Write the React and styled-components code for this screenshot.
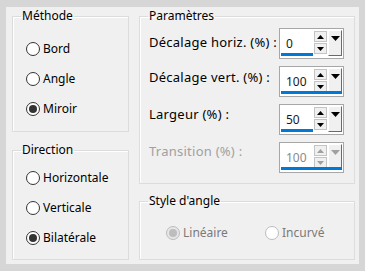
import React from "react";
import styled, { createGlobalStyle } from "styled-components";

const Global = createGlobalStyle`
  html, body { margin: 0; padding: 0; }
  body { font-family: "Noto Sans", "Open Sans", sans-serif; }
`;

const Frame = styled.div`
  width: 365px;
  height: 271px;
  box-sizing: border-box;
  padding: 7px 6px;
  background: #d6d6d6;
`;

const Panel = styled.div`
  height: 100%;
  box-sizing: border-box;
  background: #f0f0f0;
  padding: 1px 4px 3px 6px;
  display: grid;
  grid-template-columns: 117px 216px;
  column-gap: 10px;
  font-size: 12px;
  line-height: 16px;
  color: #000;
`;

const Column = styled.div`
  display: flex;
  flex-direction: column;
  gap: ${(p) => p.$gap}px;
`;

const Group = styled.fieldset`
  margin: 0;
  padding: 0;
  min-width: 0;
  border: 1px solid #dcdcdc;
  box-shadow: inset 1px 1px 0 #fff;
`;

const Legend = styled.legend`
  padding: 0 1px;
  margin-left: 8px;
  font-size: 12px;
  line-height: 16px;
  color: #000;
`;

const Content = styled.div`
  padding: ${(p) => p.$pad};
  display: flex;
  flex-direction: ${(p) => (p.$row ? "row" : "column")};
  gap: ${(p) => p.$gap}px;
`;

const RadioRow = styled.label`
  display: flex;
  align-items: center;
  gap: 3px;
  height: 16px;
  color: ${(p) => (p.$disabled ? "#7a7a7a" : "#000")};
  width: ${(p) => (p.$w ? p.$w + "px" : "auto")};
`;

const Circle = styled.span`
  width: 14px;
  height: 14px;
  box-sizing: border-box;
  border-radius: 50%;
  border: 1px solid ${(p) => (p.$disabled ? "#bcbcbc" : "#333")};
  background: ${(p) => (p.$disabled && p.$on ? "#e6e6e6" : "#fff")};
  display: flex;
  align-items: center;
  justify-content: center;
  flex: none;
  &::after {
    content: "";
    display: ${(p) => (p.$on ? "block" : "none")};
    width: 8px;
    height: 8px;
    border-radius: 50%;
    background: ${(p) => (p.$disabled ? "#bdbdbd" : "#333")};
  }
`;

const ParamRow = styled.div`
  display: flex;
  justify-content: space-between;
  align-items: flex-start;
  height: 31px;
`;

const ParamLabel = styled.span`
  padding-top: ${(p) => p.$top}px;
  font-size: 13px;
  letter-spacing: 0.25px;
  color: ${(p) => (p.$disabled ? "#a0a0a0" : "#000")};
`;

const Spin = styled.div`
  position: relative;
  width: 65px;
  height: 31px;
  box-sizing: border-box;
  border: 1px solid #a7a7a7;
  background: #fff;
  display: flex;
  padding: 1px;
`;

const Field = styled.div`
  flex: 1;
  padding: 6px 0 0 5px;
  color: ${(p) => (p.$disabled ? "#8a8a8a" : "#1a1a1a")};
`;

const Steppers = styled.div`
  width: 13px;
  display: flex;
  flex-direction: column;
  gap: 1px;
  padding-top: 1px;
  margin-right: 1px;
`;

const Step = styled.div`
  height: 11px;
  box-sizing: border-box;
  border: 1px solid #c4c4c4;
  background: #f0f0f0;
  display: flex;
  align-items: center;
  justify-content: center;
`;

const Drop = styled.div`
  width: 14px;
  height: 26px;
  box-sizing: border-box;
  background: #f0f0f0;
  border-top: 1px solid #fff;
  border-left: 1px solid #fff;
  border-right: 1px solid #6a6a6a;
  border-bottom: 1px solid #6a6a6a;
  display: flex;
  justify-content: center;
  padding-top: 5px;
`;

const Bar = styled.div`
  position: absolute;
  left: 1px;
  bottom: 2px;
  height: 3px;
  background: #0078d7;
`;

const Tri = ({ up, color, w = 7, h = 4 }) => (
  <svg width={w} height={h} viewBox={`0 0 ${w} ${h}`}>
    <polygon
      points={up ? `0,${h} ${w},${h} ${w / 2},0` : `0,0 ${w},0 ${w / 2},${h}`}
      fill={color}
    />
  </svg>
);

const SpinBox = ({ value, fill, disabled }) => {
  const c = disabled ? "#a0a0a0" : "#000";
  return (
    <Spin>
      <Field $disabled={disabled}>{value}</Field>
      <Steppers>
        <Step>
          <Tri up color={c} />
        </Step>
        <Step>
          <Tri color={c} />
        </Step>
      </Steppers>
      <Drop>
        <Tri color={c} w={9} h={5} />
      </Drop>
      <Bar style={{ width: fill }} />
    </Spin>
  );
};

const Radio = ({ label, on, disabled, w }) => (
  <RadioRow $disabled={disabled} $w={w}>
    <Circle $on={on} $disabled={disabled} />
    {label}
  </RadioRow>
);

export default function App() {
  return (
    <>
      <Global />
      <Frame>
        <Panel>
          <Column $gap={10}>
            <Group>
              <Legend>Méthode</Legend>
              <Content $pad="17px 8px 14px 13px" $gap={14}>
                <Radio label="Bord" />
                <Radio label="Angle" />
                <Radio label="Miroir" on />
              </Content>
            </Group>
            <Group>
              <Legend>Direction</Legend>
              <Content $pad="12px 8px 13px 13px" $gap={14}>
                <Radio label="Horizontale" />
                <Radio label="Verticale" />
                <Radio label="Bilatérale" on />
              </Content>
            </Group>
          </Column>
          <Column $gap={9}>
            <Group>
              <Legend>Paramètres</Legend>
              <Content $pad="4px 10px 10px 9px" $gap={7}>
                <ParamRow>
                  <ParamLabel $top={6}>Décalage horiz. (%) :</ParamLabel>
                  <SpinBox value="0" fill={32} />
                </ParamRow>
                <ParamRow>
                  <ParamLabel $top={3}>Décalage vert. (%) :</ParamLabel>
                  <SpinBox value="100" fill={61} />
                </ParamRow>
                <ParamRow>
                  <ParamLabel $top={2}>Largeur (%) :</ParamLabel>
                  <SpinBox value="50" fill={32} />
                </ParamRow>
                <ParamRow>
                  <ParamLabel $top={1} $disabled>
                    Transition (%) :
                  </ParamLabel>
                  <SpinBox value="100" fill={61} disabled />
                </ParamRow>
              </Content>
            </Group>
            <Group>
              <Legend>Style d'angle</Legend>
              <Content $pad="16px 8px 18px 26px" $gap={0} $row>
                <Radio label="Linéaire" on disabled w={99} />
                <Radio label="Incurvé" disabled />
              </Content>
            </Group>
          </Column>
        </Panel>
      </Frame>
    </>
  );
}
